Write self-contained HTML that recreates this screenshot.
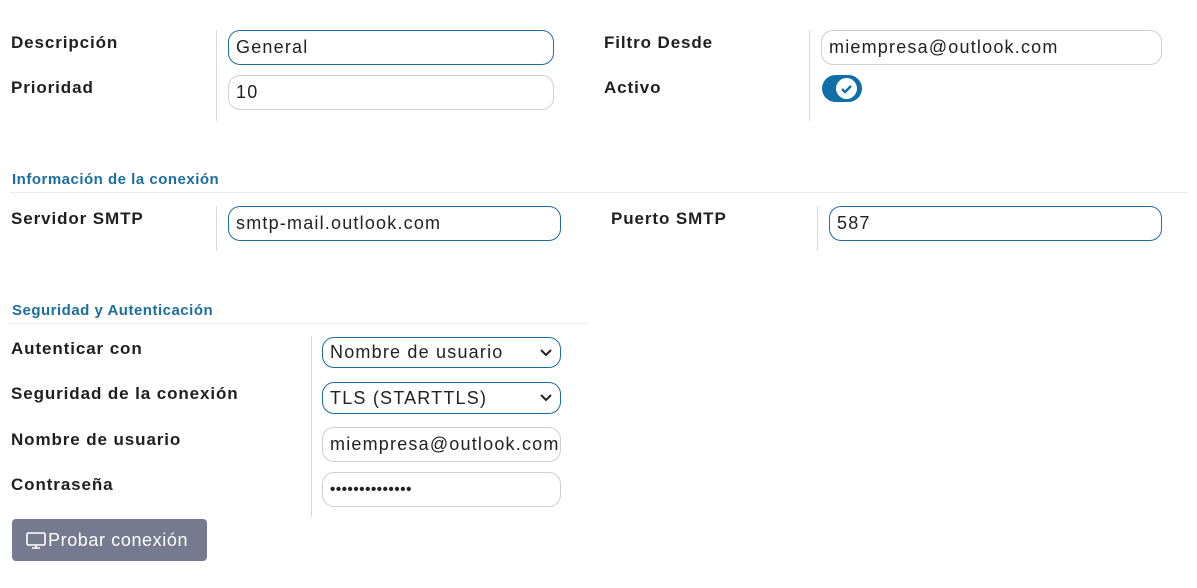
<!DOCTYPE html>
<html><head><meta charset="utf-8"><style>
body{margin:0;width:1197px;height:588px;background:#fff;font-family:"Liberation Sans",sans-serif;position:relative;overflow:hidden}
.l{position:absolute;font-weight:bold;font-size:17px;color:#1f1f1f;line-height:20px;letter-spacing:0.9px}
.v{position:absolute;width:1px;background:#d8d8d8}
.i{position:absolute;box-sizing:border-box;border:1px solid #cfcfcf;border-radius:12px;font-size:18px;color:#222;padding-left:7px;display:flex;align-items:center;white-space:nowrap;overflow:hidden;letter-spacing:1.2px}
.b{border-color:#1a6fa0}
.s{position:absolute;font-weight:bold;font-size:15px;color:#1a6fa0;letter-spacing:0.5px}
.r{position:absolute;height:1px;background:#ececec}
.chev{position:absolute;right:8px;top:50%;margin-top:-4px;background:#fff}
</style></head><body>
<div class="l" style="left:11px;top:33px">Descripción</div>
<div class="l" style="left:11px;top:78px">Prioridad</div>
<div class="v" style="left:216px;top:30px;height:91px"></div>
<div class="i b" style="left:228px;top:30px;width:326px;height:35px">General</div>
<div class="i" style="left:228px;top:75px;width:326px;height:35px">10</div>

<div class="l" style="left:604px;top:33px">Filtro Desde</div>
<div class="l" style="left:604px;top:78px">Activo</div>
<div class="v" style="left:809px;top:30px;height:91px"></div>
<div class="i" style="left:821px;top:30px;width:341px;height:35px">miempresa@outlook.com</div>
<div style="position:absolute;left:822px;top:75px;width:40px;height:27px;border-radius:14px;background:#0f6fa6"></div>
<div style="position:absolute;left:836px;top:78px;width:21px;height:21px;border-radius:50%;background:#fff"></div>
<svg style="position:absolute;left:836px;top:78px" width="21" height="21"><path d="M6 11l3 3 6-6" stroke="#0f6fa6" stroke-width="2.4" fill="none"/></svg>

<div class="s" style="left:12px;top:171px">Información de la conexión</div>
<div class="r" style="left:10px;top:192px;width:1178px"></div>
<div class="l" style="left:11px;top:209px">Servidor SMTP</div>
<div class="v" style="left:216px;top:206px;height:45px"></div>
<div class="i b" style="left:228px;top:206px;width:333px;height:35px">smtp-mail.outlook.com</div>
<div class="l" style="left:611px;top:209px">Puerto SMTP</div>
<div class="v" style="left:817px;top:206px;height:45px"></div>
<div class="i b" style="left:829px;top:206px;width:333px;height:35px">587</div>

<div class="s" style="left:12px;top:302px">Seguridad y Autenticación</div>
<div class="r" style="left:10px;top:323px;width:578px"></div>
<div class="l" style="left:11px;top:339px">Autenticar con</div>
<div class="l" style="left:11px;top:384px">Seguridad de la conexión</div>
<div class="l" style="left:11px;top:430px">Nombre de usuario</div>
<div class="l" style="left:11px;top:475px">Contraseña</div>
<div class="v" style="left:311px;top:336px;height:181px"></div>
<div class="i b" style="left:322px;top:337px;width:239px;height:31px">Nombre de usuario<svg class="chev" width="12" height="8"><path d="M1 1l5 5 5-5" stroke="#222" stroke-width="2" fill="none"/></svg></div>
<div class="i b" style="left:322px;top:382px;width:239px;height:32px">TLS (STARTTLS)<svg class="chev" width="12" height="8"><path d="M1 1l5 5 5-5" stroke="#222" stroke-width="2" fill="none"/></svg></div>
<div class="i" style="left:322px;top:427px;width:239px;height:35px">miempresa@outlook.com</div>
<div class="i" style="left:322px;top:472px;width:239px;height:35px;font-size:15px;letter-spacing:0.6px;font-weight:bold">••••••••••••••</div>

<div style="position:absolute;left:12px;top:519px;width:195px;height:42px;background:#757a8e;border-radius:4px;color:#fff;font-size:18px;display:flex;align-items:center;padding-left:13px;box-sizing:border-box;letter-spacing:0.6px">
<svg width="22" height="20" style="margin-right:1px"><rect x="2" y="3" width="18" height="12" rx="1.5" stroke="#fff" stroke-width="1.6" fill="none"/><path d="M7 18h8M11 15v3" stroke="#fff" stroke-width="1.6"/></svg>Probar conexión</div>
</body></html>
